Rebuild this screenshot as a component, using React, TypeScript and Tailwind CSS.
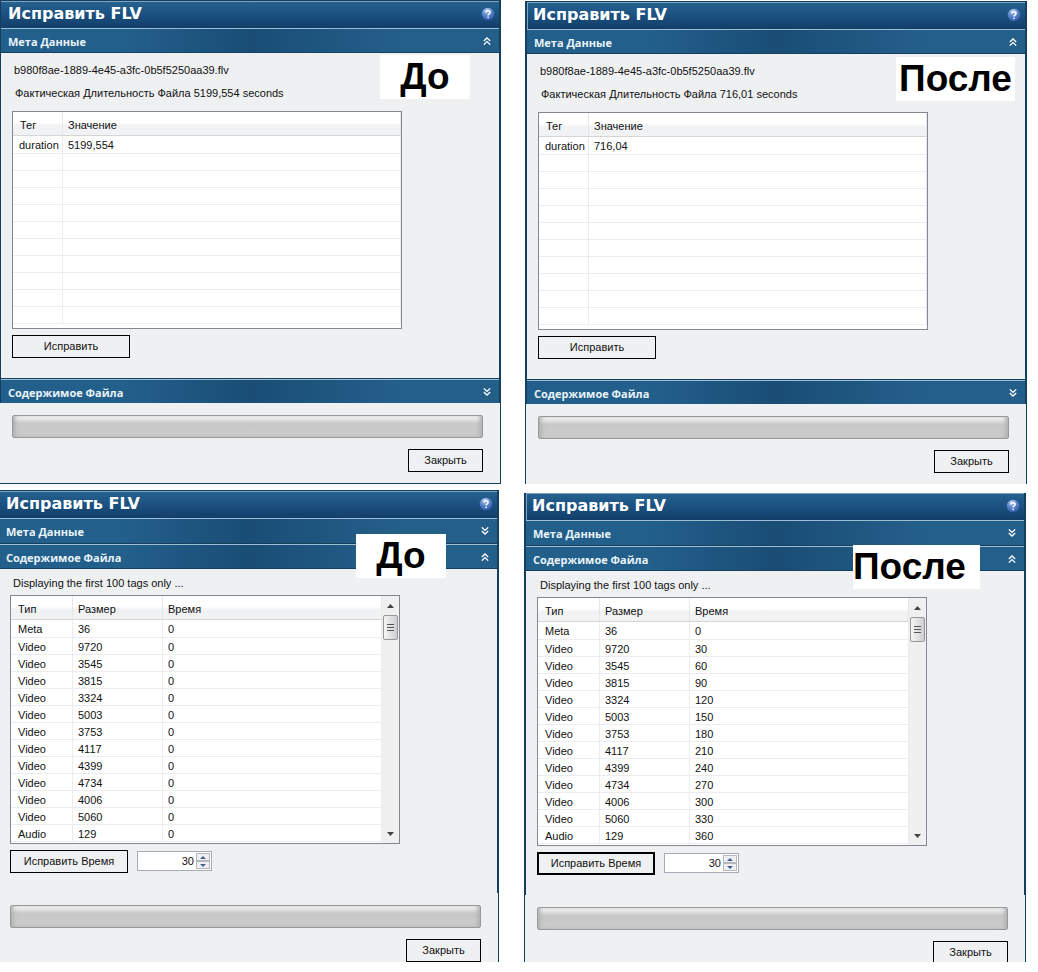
import React from 'react'
import clsx from 'clsx'

type Variant = {
  label: string
  side: 'left' | 'right'
}

const sizes = [36, 9720, 3545, 3815, 3324, 5003, 3753, 4117, 4399, 4734, 4006, 5060, 129]

const tagType = (i: number) => {
  if (i === 0) return 'Meta'
  return i === sizes.length - 1 ? 'Audio' : 'Video'
}

const HelpIcon: React.FC = () => (
  <svg viewBox="0 0 14 14" className="size-3.5">
    <defs>
      <radialGradient id="help" cx="0.4" cy="0.2" r="0.9">
        <stop offset="0" stopColor="#b9cdf0" />
        <stop offset="0.45" stopColor="#5c86cc" />
        <stop offset="1" stopColor="#2350a4" />
      </radialGradient>
    </defs>
    <circle cx="7" cy="7" r="6.3" fill="url(#help)" />
    <path d="M5 5.4C5 3.2 9.1 3.2 9.1 5.4C9.1 6.8 7.1 6.8 7.1 8.4" fill="none" stroke="#fff" strokeWidth="1.5" />
    <circle cx="7.1" cy="10.3" r="0.9" fill="#fff" />
  </svg>
)

const Chevrons: React.FC<{ open: boolean }> = ({ open }) => (
  <svg viewBox="0 0 8 8" className={clsx('w-2 h-2', !open && 'rotate-180')} fill="none" stroke="#fff" strokeWidth="1.3">
    <path d="M0.8 4L4 1L7.2 4M0.8 7.6L4 4.6L7.2 7.6" />
  </svg>
)

const TitleBar: React.FC<{ side: string }> = ({ side }) => (
  <div
    className={clsx(
      'flex h-[27px] items-center justify-between border-t border-[#7fa3c0] bg-linear-to-b from-[#25628f] via-[#1b5080] to-[#123e68] pr-1',
      side === 'right' ? 'border-l pl-[5px]' : 'pl-[7px]'
    )}
  >
    <h1 className="pb-0.5 font-['DejaVu_Sans',sans-serif] text-[16px] leading-5 font-bold text-white">Исправить FLV</h1>
    <button aria-label="Справка" className="pb-0.5"><HelpIcon /></button>
  </div>
)

const SectionBar: React.FC<{ title: string; open: boolean; className: string }> = ({ title, open, className }) => (
  <button
    aria-expanded={open}
    className={clsx(
      'flex w-full items-center justify-between border-t border-[#9dbdd2] bg-linear-to-r from-[#235f8b] from-25% via-[#194d76] to-[#245f8a] to-80% pl-[7px] pr-2',
      className
    )}
  >
    <span className="pt-0.5 font-['Open_Sans','Noto_Sans',sans-serif] text-[11px] leading-4 font-bold text-[#eaf4fa]">{title}</span>
    <Chevrons open={open} />
  </button>
)

const HeadCell: React.FC<{ children: string; className?: string }> = ({ children, className }) => (
  <th scope="col" className={clsx('h-6 border-b border-r border-b-[#d5d5d5] border-r-[#e4e6e8] bg-linear-to-b from-white from-45% to-[#f1f2f4] to-60% px-[5px] pt-1 text-left font-normal', className)}>
    {children}
  </th>
)

const cell = 'border-b border-r border-[#ececee] px-[5px] pt-0.5 pb-0 whitespace-nowrap'

const MetaTable: React.FC<{ duration: string }> = ({ duration }) => (
  <div className="mt-2.5 mr-[97px] h-[218px] border border-[#828790] bg-white">
    <table className="w-full table-fixed border-separate border-spacing-0">
      <thead>
        <tr>
          <HeadCell className="w-[50px] pl-[7px]">Тег</HeadCell>
          <HeadCell>Значение</HeadCell>
        </tr>
      </thead>
      <tbody>
        <tr className="h-[18px]">
          <td className={clsx(cell, 'pl-[6px]')}>duration</td>
          <td className={cell}>{duration}</td>
        </tr>
        {Array.from({ length: 10 }, (_, i) => (
          <tr key={i} className="h-[17px]">
            <td className={cell}></td>
            <td className={cell}></td>
          </tr>
        ))}
      </tbody>
    </table>
  </div>
)

const ScrollBar: React.FC = () => (
  <div className="flex w-[17px] flex-col items-center bg-[#f0f0f1]">
    <button aria-label="Вверх" className="flex h-[19px] w-full items-center justify-center">
      <svg viewBox="0 0 7 4" className="h-1 w-[7px]"><path d="M0 4L3.5 0L7 4Z" fill="#444" /></svg>
    </button>
    <div className="flex h-[25px] w-[15px] flex-col items-center justify-center gap-0.5 rounded-xs border border-[#979797] bg-linear-to-r from-[#f5f5f5] to-[#cfcfd1]">
      <span className="h-px w-[7px] bg-[#555]" />
      <span className="h-px w-[7px] bg-[#555]" />
      <span className="h-px w-[7px] bg-[#555]" />
    </div>
    <button aria-label="Вниз" className="mt-auto flex h-[19px] w-full items-center justify-center">
      <svg viewBox="0 0 7 4" className="h-1 w-[7px]"><path d="M0 0L3.5 4L7 0Z" fill="#444" /></svg>
    </button>
  </div>
)

const TagTable: React.FC<{ step: number }> = ({ step }) => (
  <div className="mt-1 mr-[97px] flex h-[249px] border border-[#828790] bg-white">
    <table className="min-w-0 flex-1 table-fixed self-start border-separate border-spacing-0">
      <thead>
        <tr>
          <HeadCell className="w-[62px] pl-[7px]">Тип</HeadCell>
          <HeadCell className="w-[90px]">Размер</HeadCell>
          <HeadCell>Время</HeadCell>
        </tr>
      </thead>
      <tbody>
        {sizes.map((size, i) => (
          <tr key={size} className={i === 0 ? 'h-[18px]' : 'h-[17px]'}>
            <td className={clsx(cell, 'pl-[7px]')}>{tagType(i)}</td>
            <td className={cell}>{size}</td>
            <td className={cell}>{i * step}</td>
          </tr>
        ))}
      </tbody>
    </table>
    <ScrollBar />
  </div>
)

const Spinner: React.FC = () => (
  <div className="mt-px flex h-5 w-[75px] border border-[#a5abb5] bg-white p-px">
    <input aria-label="Время" defaultValue="30" className="min-w-0 flex-1 pr-0.5 text-right outline-none" />
    <div className="flex w-3.5 flex-col">
      <button aria-label="Больше" className="flex flex-1 items-center justify-center border border-[#b4b8be] bg-[#f0f0f2]">
        <svg viewBox="0 0 6 3" className="h-[3px] w-1.5"><path d="M0 3L3 0L6 3Z" fill="#4a5f8f" /></svg>
      </button>
      <button aria-label="Меньше" className="flex flex-1 items-center justify-center border border-[#b4b8be] bg-[#f0f0f2]">
        <svg viewBox="0 0 6 3" className="h-[3px] w-1.5"><path d="M0 0L3 3L6 0Z" fill="#4a5f8f" /></svg>
      </button>
    </div>
  </div>
)

const Footer: React.FC<{ className: string }> = ({ className }) => (
  <div className={clsx('border-[#12405f] border-r pt-3 pr-[17px]', className)}>
    <div
      role="progressbar"
      aria-label="Прогресс"
      className="h-[23px] rounded-xs border border-[#979a9d] bg-linear-to-b from-[#f4f4f4] from-5% via-[#c8c8c8] via-35% to-[#cbcbcb] shadow-[inset_4px_0_4px_-2px_#adadad,inset_-4px_0_4px_-2px_#adadad]"
    />
    <div className="mt-[11px] flex justify-end">
      <button className="h-[23px] w-[75px] border border-black">Закрыть</button>
    </div>
  </div>
)

const Badge: React.FC<{ children: string; className: string }> = ({ children, className }) => (
  <div className={clsx("absolute bg-white font-['Liberation_Sans',Arial,sans-serif] text-[37px] leading-[44px] font-bold text-black", className)}>
    {children}
  </div>
)

const frame = (side: string) => clsx('border-[#153f5e] border-r-2', side === 'left' ? 'border-l border-t' : 'border-l-2')

const footerSide = (side: string) => (side === 'left' ? 'pl-3' : 'border-l pl-3')

const MetaPanel: React.FC<Variant & { actual: string; duration: string }> = ({ label, side, actual, duration }) => (
  <section className="relative bg-[#eff0f2]">
    <div className={clsx(frame(side), 'border-t')}>
      <TitleBar side={side} />
      <SectionBar title="Мета Данные" open className="h-[25px] border-b border-b-[#153f5e]" />
      <div className="border-b border-[#153f5e] pt-[9px] pb-5 pl-[11px]">
        <p className="pl-0.5 leading-4">b980f8ae-1889-4e45-a3fc-0b5f5250aa39.flv</p>
        <p className="mt-[7px] pl-[3px] leading-4">Фактическая Длительность Файла {actual} seconds</p>
        <MetaTable duration={duration} />
        <button className="mt-1.5 block h-[23px] w-[118px] border border-black">Исправить</button>
      </div>
      <SectionBar title="Содержимое Файла" open={false} className="h-6" />
    </div>
    <Footer className={clsx('pb-[11px]', footerSide(side), side === 'left' && 'border-b')} />
    <Badge className={side === 'left' ? 'top-[55px] right-[31px] w-[90px] text-center' : 'top-[56px] right-3 w-[119px] text-center'}>
      {label}
    </Badge>
  </section>
)

const TagPanel: React.FC<Variant & { step: number; focused?: boolean }> = ({ label, side, step, focused }) => (
  <section className={clsx('relative bg-[#eff0f2]', side === 'left' ? 'mr-0.5 -ml-0.5' : 'mr-px -ml-px')}>
    <div className={frame(side)}>
      <TitleBar side={side} />
      <SectionBar title="Мета Данные" open={false} className="h-[26px] border-b border-b-[#153f5e]" />
      <SectionBar title="Содержимое Файла" open className="h-[25px] border-b border-b-[#153f5e]" />
      <div className="pt-1.5 pb-5 pl-[11px]">
        <p className="pl-[3px] leading-4">Displaying the first 100 tags only ...</p>
        <TagTable step={step} />
        <div className="mt-1.5 flex gap-[9px]">
          <button className={clsx('h-[23px] w-[118px] border-black', focused ? 'border-2' : 'border')}>Исправить Время</button>
          <Spinner />
        </div>
      </div>
    </div>
    <Footer className={clsx('overflow-hidden', footerSide(side), side === 'left' ? 'h-[69px]' : 'h-[67px]')} />
    <Badge className={side === 'left' ? 'top-11 right-[53px] w-[90px] text-center' : 'top-[52px] right-[46px] w-[127px]'}>
      {label}
    </Badge>
  </section>
)

const App: React.FC = () => {
  return (
    <main className="flex items-start gap-6 overflow-hidden bg-white pr-3 font-['Liberation_Sans',Arial,sans-serif] text-[11px] leading-none text-[#111]">
      <div className="flex min-w-0 flex-1 flex-col gap-1.5">
        <MetaPanel label="До" side="left" actual="5199,554" duration="5199,554" />
        <TagPanel label="До" side="left" step={0} />
      </div>
      {/* the right-hand windows are one pixel wider than the left-hand ones */}
      <div className="min-w-0 flex-1">
        <div className="-mr-px flex flex-col gap-[9px] pt-px">
          <MetaPanel label="После" side="right" actual="716,01" duration="716,04" />
          <TagPanel label="После" side="right" step={30} focused />
        </div>
      </div>
    </main>
  )
}
export default App
